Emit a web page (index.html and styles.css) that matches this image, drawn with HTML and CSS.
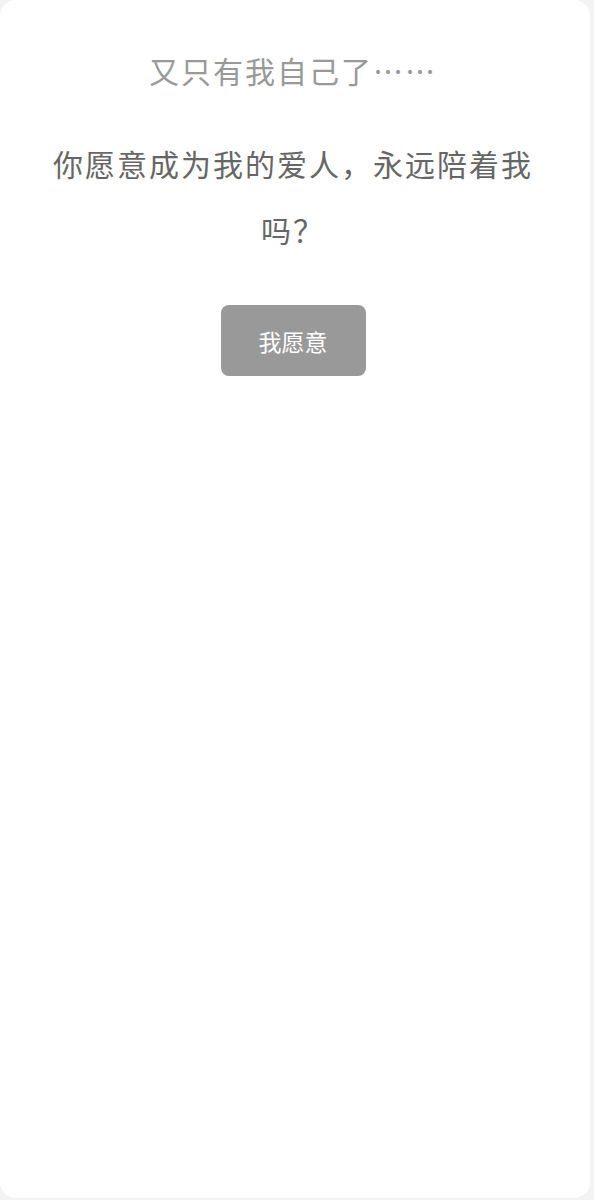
FILE: index.html
```html
<!DOCTYPE html>
<html lang="zh-CN">
<head>
    <meta charset="UTF-8">
    <meta name="viewport" content="width=device-width, initial-scale=1.0">
    <title>我愿意</title>
    <link rel="stylesheet" href="styles.css">
</head>
<body>

    <!-- Card -->
    <div class="card">
        <h2 class="title">又只有我自己了……</h2>
        <p class="question">你愿意成为我的爱人，永远陪着我吗？</p>
        <button class="yes-btn">我愿意</button>
    </div>

</body>
</html>
```

FILE: styles.css
```css
body {
    font-family: "Noto Sans CJK SC", "Noto Sans", sans-serif;
    margin: 0;
    background-color: #f3f3f3;
}
.card {
    width: 590px;
    height: 1198px;
    box-sizing: border-box;
    background-color: #fff;
    border-radius: 16px;
    padding: 49px 47px 0 43px;
    display: flex;
    flex-direction: column;
    align-items: center;
}
.title {
    margin: 0;
    font-size: 30px;
    font-weight: normal;
    line-height: 42px;
    letter-spacing: 2px;
    color: #999;
    text-align: center;
}
.question {
    margin: 39px 0 0;
    font-size: 30px;
    line-height: 66px;
    letter-spacing: 2px;
    color: #666;
    text-align: center;
}
.yes-btn {
    margin-top: 43px;
    width: 145px;
    height: 71px;
    font-family: inherit;
    font-size: 23px;
    color: #fff;
    background-color: #999;
    border: none;
    border-radius: 8px;
    cursor: pointer;
}
```
